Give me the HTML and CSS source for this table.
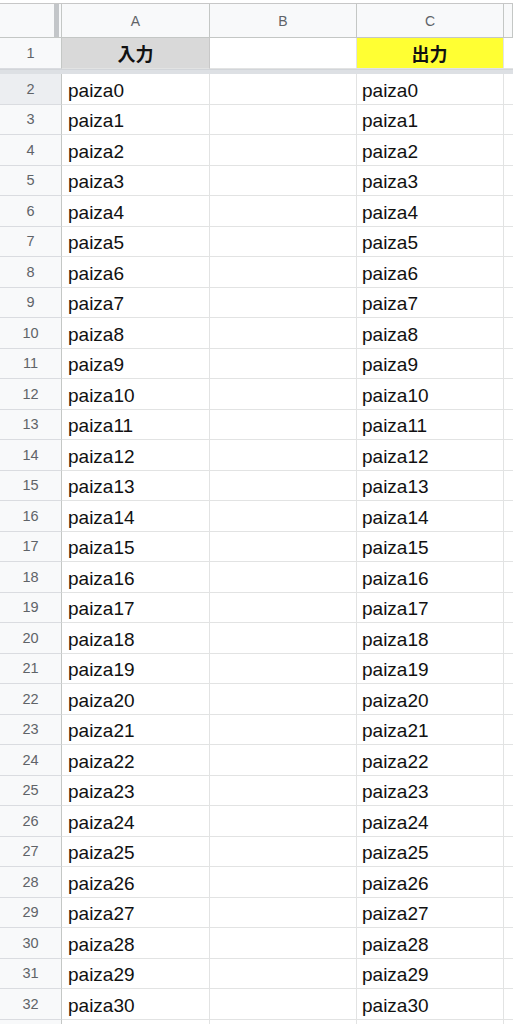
FILE: index.html
```html
<!DOCTYPE html>
<html lang="ja">
<head>
<meta charset="utf-8">
<link rel="stylesheet" href="styles.css">
</head>
<body>
<div class="sheet">
  <div class="topstrip"></div>
  <div class="row colhead">
    <div class="corner"></div>
    <div class="ch">A</div>
    <div class="ch">B</div>
    <div class="ch">C</div>
    <div class="ch"></div>
  </div>
  <div class="row r1">
    <div class="rh">1</div>
    <div class="cell hdr-in">入力</div>
    <div class="cell"></div>
    <div class="cell hdr-out">出力</div>
    <div class="cell"></div>
  </div>
  <div class="freeze"></div>
  <div class="row"><div class="rh sel">2</div><div class="cell">paiza0</div><div class="cell"></div><div class="cell">paiza0</div><div class="cell"></div></div>
  <div class="row"><div class="rh">3</div><div class="cell">paiza1</div><div class="cell"></div><div class="cell">paiza1</div><div class="cell"></div></div>
  <div class="row"><div class="rh">4</div><div class="cell">paiza2</div><div class="cell"></div><div class="cell">paiza2</div><div class="cell"></div></div>
  <div class="row"><div class="rh">5</div><div class="cell">paiza3</div><div class="cell"></div><div class="cell">paiza3</div><div class="cell"></div></div>
  <div class="row"><div class="rh">6</div><div class="cell">paiza4</div><div class="cell"></div><div class="cell">paiza4</div><div class="cell"></div></div>
  <div class="row"><div class="rh">7</div><div class="cell">paiza5</div><div class="cell"></div><div class="cell">paiza5</div><div class="cell"></div></div>
  <div class="row"><div class="rh">8</div><div class="cell">paiza6</div><div class="cell"></div><div class="cell">paiza6</div><div class="cell"></div></div>
  <div class="row"><div class="rh">9</div><div class="cell">paiza7</div><div class="cell"></div><div class="cell">paiza7</div><div class="cell"></div></div>
  <div class="row"><div class="rh">10</div><div class="cell">paiza8</div><div class="cell"></div><div class="cell">paiza8</div><div class="cell"></div></div>
  <div class="row"><div class="rh">11</div><div class="cell">paiza9</div><div class="cell"></div><div class="cell">paiza9</div><div class="cell"></div></div>
  <div class="row"><div class="rh">12</div><div class="cell">paiza10</div><div class="cell"></div><div class="cell">paiza10</div><div class="cell"></div></div>
  <div class="row"><div class="rh">13</div><div class="cell">paiza11</div><div class="cell"></div><div class="cell">paiza11</div><div class="cell"></div></div>
  <div class="row"><div class="rh">14</div><div class="cell">paiza12</div><div class="cell"></div><div class="cell">paiza12</div><div class="cell"></div></div>
  <div class="row"><div class="rh">15</div><div class="cell">paiza13</div><div class="cell"></div><div class="cell">paiza13</div><div class="cell"></div></div>
  <div class="row"><div class="rh">16</div><div class="cell">paiza14</div><div class="cell"></div><div class="cell">paiza14</div><div class="cell"></div></div>
  <div class="row"><div class="rh">17</div><div class="cell">paiza15</div><div class="cell"></div><div class="cell">paiza15</div><div class="cell"></div></div>
  <div class="row"><div class="rh">18</div><div class="cell">paiza16</div><div class="cell"></div><div class="cell">paiza16</div><div class="cell"></div></div>
  <div class="row"><div class="rh">19</div><div class="cell">paiza17</div><div class="cell"></div><div class="cell">paiza17</div><div class="cell"></div></div>
  <div class="row"><div class="rh">20</div><div class="cell">paiza18</div><div class="cell"></div><div class="cell">paiza18</div><div class="cell"></div></div>
  <div class="row"><div class="rh">21</div><div class="cell">paiza19</div><div class="cell"></div><div class="cell">paiza19</div><div class="cell"></div></div>
  <div class="row"><div class="rh">22</div><div class="cell">paiza20</div><div class="cell"></div><div class="cell">paiza20</div><div class="cell"></div></div>
  <div class="row"><div class="rh">23</div><div class="cell">paiza21</div><div class="cell"></div><div class="cell">paiza21</div><div class="cell"></div></div>
  <div class="row"><div class="rh">24</div><div class="cell">paiza22</div><div class="cell"></div><div class="cell">paiza22</div><div class="cell"></div></div>
  <div class="row"><div class="rh">25</div><div class="cell">paiza23</div><div class="cell"></div><div class="cell">paiza23</div><div class="cell"></div></div>
  <div class="row"><div class="rh">26</div><div class="cell">paiza24</div><div class="cell"></div><div class="cell">paiza24</div><div class="cell"></div></div>
  <div class="row"><div class="rh">27</div><div class="cell">paiza25</div><div class="cell"></div><div class="cell">paiza25</div><div class="cell"></div></div>
  <div class="row"><div class="rh">28</div><div class="cell">paiza26</div><div class="cell"></div><div class="cell">paiza26</div><div class="cell"></div></div>
  <div class="row"><div class="rh">29</div><div class="cell">paiza27</div><div class="cell"></div><div class="cell">paiza27</div><div class="cell"></div></div>
  <div class="row"><div class="rh">30</div><div class="cell">paiza28</div><div class="cell"></div><div class="cell">paiza28</div><div class="cell"></div></div>
  <div class="row"><div class="rh">31</div><div class="cell">paiza29</div><div class="cell"></div><div class="cell">paiza29</div><div class="cell"></div></div>
  <div class="row"><div class="rh">32</div><div class="cell">paiza30</div><div class="cell"></div><div class="cell">paiza30</div><div class="cell"></div></div>
  <div class="row"><div class="rh"></div><div class="cell"></div><div class="cell"></div><div class="cell"></div><div class="cell"></div></div>
</div>
</body>
</html>
```

FILE: styles.css
```css
html, body {
  margin: 0;
  padding: 0;
  background: #ffffff;
  overflow: hidden;
}

.sheet {
  font-family: "Liberation Sans", Arial, "Noto Sans CJK JP", sans-serif;
  color: #000;
  width: 513px;
  height: 1024px;
  overflow: hidden;
}

.topstrip {
  height: 3px;
  background: #ffffff;
}

.row {
  display: grid;
  grid-template-columns: 62px 148px 147px 147px 1fr;
  height: 30.5px;
  box-sizing: border-box;
}

.colhead {
  height: 35px;
  border-top: 1px solid #c7c7c7;
  border-bottom: 1px solid #c4c7c5;
  background: #f8f9fa;
}

.corner {
  position: relative;
  border-right: 1px solid #c4c7c5;
  background: #f8f9fa;
}

.corner::after {
  content: "";
  position: absolute;
  top: 0;
  bottom: 0;
  right: 2px;
  width: 5px;
  background: #c3c6c9;
}

.ch {
  display: flex;
  align-items: center;
  justify-content: center;
  font-size: 14px;
  color: #5f6368;
  border-right: 1px solid #c4c7c5;
}

.r1 {
  height: 31px;
}

.rh {
  display: flex;
  align-items: center;
  justify-content: center;
  font-size: 14.5px;
  color: #5f6368;
  background: #f8f9fa;
  border-right: 1px solid #c4c7c5;
  border-bottom: 1px solid #dadce0;
}

.rh.sel {
  background: #eceef1;
}

.cell {
  display: flex;
  align-items: center;
  padding: 4px 6px 0 6px;
  font-size: 19px;
  color: #111;
  border-right: 1px solid #e2e3e3;
  border-bottom: 1px solid #e2e3e3;
  box-sizing: border-box;
  white-space: nowrap;
  overflow: hidden;
}

.cell:nth-child(4) {
  padding-left: 5px;
}

.hdr-in,
.hdr-out {
  justify-content: center;
  font-weight: bold;
  font-size: 18px;
  font-family: "Noto Sans CJK JP", sans-serif;
  padding-top: 0;
}

.hdr-in {
  background: #d9d9d9;
  border-right-color: #c8c8c8;
}

.hdr-out {
  background: #ffff33;
}

.freeze {
  height: 5px;
  background: #dde0e4;
  border-top: 1px solid #d2d5d9;
  box-sizing: border-box;
}
```
